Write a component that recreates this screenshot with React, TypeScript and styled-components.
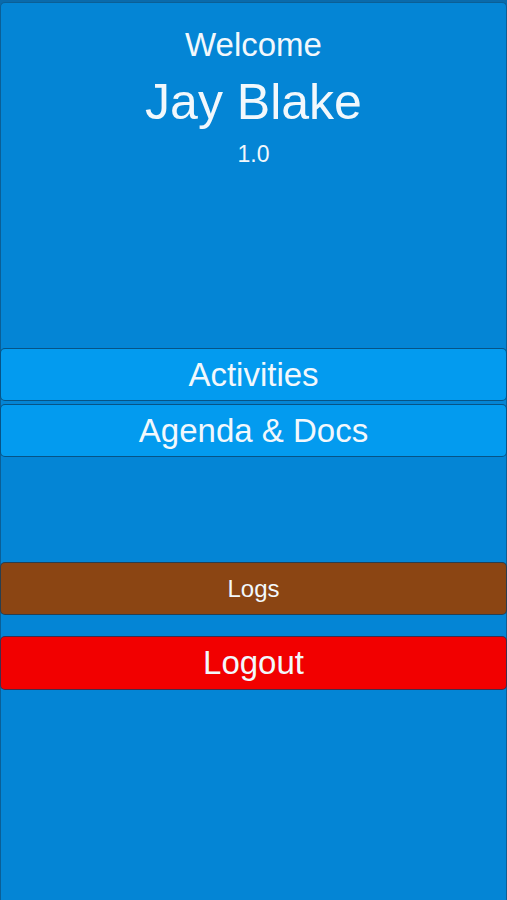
import styled, { createGlobalStyle } from "styled-components";

const GlobalStyle = createGlobalStyle`
    html, body {
        margin: 0;
        padding: 0;
        background: #0a6aab;
        font-family: "Liberation Sans", Arial, sans-serif;
    }
    * {
        box-sizing: border-box;
    }
`

const Panel = styled.div`
    display: flex;
    flex-direction: column;
    margin-top: 2px;
    min-height: calc(100vh - 2px);
    background: #0485d5;
    border: 1px solid #0b5f96;
    border-bottom: none;
    border-radius: 5px 5px 0 0;
    color: #f2f8fc;
    padding-top: 22px;
`

const Header = styled.div`
    display: flex;
    flex-direction: column;
    align-items: center;
    gap: 7px;
`

const Greeting = styled.div<{ $size: number; $line: number }>`
    font-size: ${p => p.$size}px;
    line-height: ${p => p.$line}px;
    text-align: center;
`

const Menu = styled.div`
    display: flex;
    flex-direction: column;
    gap: 3px;
    margin-top: 179px;
    margin-left: -1px;
    margin-right: -1px;
`

const Button = styled.button<{ $bg: string; $size: number; $top?: number; $height?: number }>`
    display: flex;
    align-items: center;
    justify-content: center;
    width: 100%;
    height: ${p => p.$height ?? 53}px;
    margin-top: ${p => p.$top ?? 0}px;
    background: ${p => p.$bg};
    border: 1px solid rgba(8, 60, 100, 0.75);
    border-radius: 5px;
    color: #f2f8fc;
    font-family: "Liberation Sans", Arial, sans-serif;
    font-size: ${p => p.$size}px;
    padding: 0;
    cursor: pointer;
`

const App = () => {
    return (
        <>
            <GlobalStyle />
            <Panel>
                <Header>
                    <Greeting $size={33} $line={40}>Welcome</Greeting>
                    <Greeting $size={50} $line={60}>Jay Blake</Greeting>
                    <Greeting $size={23} $line={30}>1.0</Greeting>
                </Header>
                <Menu>
                    <Button $bg="#039bef" $size={33}>Activities</Button>
                    <Button $bg="#039bef" $size={33}>Agenda &amp; Docs</Button>
                    <Button $bg="#8b4513" $size={24} $top={102}>Logs</Button>
                    <Button $bg="#f20000" $size={33} $top={18} $height={54}>Logout</Button>
                </Menu>
            </Panel>
        </>
    )
}

export default App;
